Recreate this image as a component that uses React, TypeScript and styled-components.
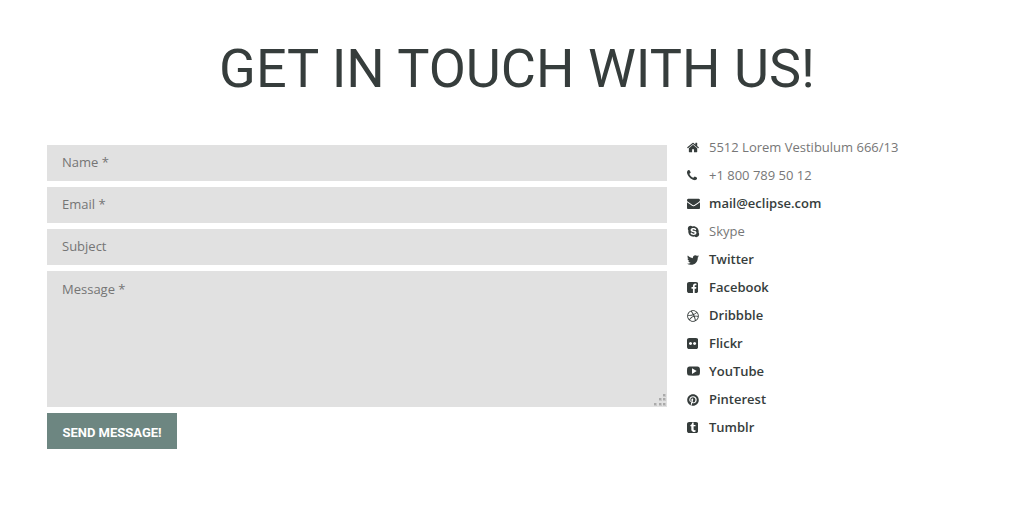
import React from "react";
import styled, { createGlobalStyle } from "styled-components";
import { FaSkype, FaTwitter, FaDribbble, FaPinterest } from "react-icons/fa";

const GlobalStyle = createGlobalStyle`
  *, *::before, *::after { box-sizing: border-box; }
  body {
    margin: 0;
    background: #fff;
    color: #777;
    font: 13px/28px "Open Sans", sans-serif;
  }
`;

const Page = styled.main`
  padding: 33px 42px 58px 47px;
`;

const Title = styled.h1`
  margin: 0 0 28px;
  color: #363d3c;
  font: 400 54px/72px Roboto, sans-serif;
  text-align: center;
  text-transform: uppercase;
`;

const Columns = styled.div`
  display: grid;
  grid-template-columns: minmax(0, 31fr) minmax(0, 15fr);
  gap: 20px;
  align-items: start;
`;

const Form = styled.form`
  display: flex;
  flex-direction: column;
  align-items: flex-start;
  gap: 6px;
  padding-top: 12px;
`;

const Field = styled.input`
  width: 100%;
  height: 36px;
  padding: 0 15px 2px;
  border: 0;
  border-radius: 0;
  background: #e1e1e1;
  color: #363d3c;
  font: 13px/18px "Open Sans", sans-serif;
  &::placeholder { color: #757575; opacity: 1; }
`;

const MessageBox = styled.div`
  position: relative;
  width: 100%;
`;

const Message = styled(Field).attrs({ as: "textarea" })`
  display: block;
  height: 136px;
  padding: 9px 15px;
  resize: none;
`;

const Grip = styled.svg`
  position: absolute;
  right: 0;
  bottom: 0;
  width: 14px;
  height: 14px;
  pointer-events: none;
`;

const SendButton = styled.button`
  min-width: 130px;
  height: 36px;
  padding: 3px 15px 0;
  border: 0;
  background: #6d8681;
  color: #fff;
  font: 700 13px/18px Roboto, sans-serif;
  text-transform: uppercase;
  cursor: pointer;
`;

const Contacts = styled.ul`
  margin: 0;
  padding: 0;
  list-style: none;
`;

const Contact = styled.li`
  display: flex;
  align-items: center;
  height: 28px;
`;

const IconSlot = styled.span<{ $size: number }>`
  display: flex;
  align-items: center;
  width: 22px;
  height: 14px;
  padding-top: 1px;
  color: #363d3c;
  svg { display: block; height: ${(p) => p.$size}px; width: auto; }
`;

const ContactLink = styled.a`
  color: #363d3c;
  font-weight: 600;
  text-decoration: none;
`;

const Glyph = ({ box, d }: { box: string; d: string }) => (
  <svg viewBox={box} fill="currentColor" aria-hidden="true">
    <path d={d} />
  </svg>
);

const HomeIcon = () => (
  <Glyph
    box="64 0 1664 1792"
    d="M1472 992v480q0 26-19 45t-45 19h-384v-384h-256v384h-384q-26 0-45-19t-19-45v-480q0-1 .5-3t.5-3l575-474 575 474q1 2 1 6zm223-69l-62 74q-8 9-21 11h-3q-13 0-21-7l-692-577-692 577q-12 8-24 7-13-2-21-11l-62-74q-8-10-7-23.5t11-21.5l719-599q32-26 76-26t76 26l244 204v-195q0-14 9-23t23-9h192q14 0 23 9t9 23v408l219 182q10 8 11 21.5t-7 23.5z"
  />
);
const PhoneIcon = () => (
  <Glyph
    box="192 0 1408 1792"
    d="M1600 1240q0 27-10 70.5t-21 68.5q-21 50-122 106-94 51-186 51-27 0-53-3.5t-57.5-12.5-47-14.5-55.5-20.5-49-18q-98-35-175-83-127-79-264-216t-216-264q-48-77-83-175-3-9-18-49t-20.5-55.5-14.5-47-12.5-57.5-3.5-53q0-92 51-186 56-101 106-122 25-11 68.5-21t70.5-10q14 0 21 3 18 6 53 76 11 19 30 54t35 63.5 31 53.5q3 4 17.5 25t21.5 35.5 7 28.5q0 20-28.5 50t-62 55-62 53-28.5 46q0 9 5 22.5t8.5 20.5 14 24 11.5 19q76 137 174 235t235 174q2 1 19 11.5t24 14 20.5 8.5 22.5 5q18 0 46-28.5t53-62 55-62 50-28.5q14 0 28.5 7t35.5 21.5 25 17.5q25 15 53.5 31t63.5 35 54 30q70 35 76 53 3 7 3 21z"
  />
);
const MailIcon = () => (
  <Glyph
    box="0 0 1792 1792"
    d="M1792 710v794q0 66-47 113t-113 47h-1472q-66 0-113-47t-47-113v-794q44 49 101 87 362 246 497 345 57 42 92.5 65.5t94.5 48 110 24.5h2q51 0 110-24.5t94.5-48 92.5-65.5q170-123 498-345 57-39 100-87zm0-294q0 79-49 151t-122 123q-376 261-468 325-10 7-42.5 31t-54 38.5-52 32.5-57.5 27-50 9h-2q-23 0-50-9t-57.5-27-52-32.5-54-38.5-42.5-31q-91-64-262-182.5t-205-142.5q-62-42-117-115.5t-55-136.5q0-78 41.5-130t118.5-52h1472q65 0 112.5 47t47.5 113z"
  />
);
const FacebookIcon = () => (
  <Glyph
    box="128 0 1536 1792"
    d="M1376 128q119 0 203.5 84.5t84.5 203.5v960q0 119-84.5 203.5t-203.5 84.5h-188v-595h199l30-232h-229v-148q0-56 23.5-84t91.5-28l122-1v-207q-63-9-178-9-136 0-217.5 80t-81.5 226v171h-200v232h200v595h-532q-119 0-203.5-84.5t-84.5-203.5v-960q0-119 84.5-203.5t203.5-84.5h960z"
  />
);
const FlickrIcon = () => (
  <Glyph
    box="128 0 1536 1792"
    d="M1376 128q119 0 203.5 84.5t84.5 203.5v960q0 119-84.5 203.5t-203.5 84.5h-960q-119 0-203.5-84.5t-84.5-203.5v-960q0-119 84.5-203.5t203.5-84.5h960zm-550 768q0-88-62-150t-150-62-150 62-62 150 62 150 150 62 150-62 62-150zm564 0q0-88-62-150t-150-62-150 62-62 150 62 150 150 62 150-62 62-150z"
  />
);
const TumblrIcon = () => (
  <Glyph
    box="128 0 1536 1792"
    d="M1328 1425l-62-183q-44 22-103 22-36 1-62-10.5t-38.5-31.5-17.5-40.5-5-43.5v-398h257v-194h-256v-326h-188q-8 0-9 10-5 44-17.5 87t-39 95-77 95-118.5 68v165h130v418q0 57 21.5 115t65 111 121 85.5 176.5 30.5q69-1 136.5-25t85.5-50zm336-1009v960q0 119-84.5 203.5t-203.5 84.5h-960q-119 0-203.5-84.5t-84.5-203.5v-960q0-119 84.5-203.5t203.5-84.5h960q119 0 203.5 84.5t84.5 203.5z"
  />
);
const YouTubeIcon = () => (
  <svg viewBox="0 0 13 13" fill="currentColor" aria-hidden="true">
    <path
      fillRule="evenodd"
      d="M2.5 1.6Q6.5 1.4 10.5 1.6Q12.5 1.7 12.8 3.2Q13.2 6 12.8 9Q12.5 10.5 10.5 10.6Q6.5 10.8 2.5 10.6Q.5 10.5 .2 9Q-.2 6 .2 3.2Q.5 1.7 2.5 1.6ZM5 3.3V8.9L9.7 6.1Z"
    />
  </svg>
);

type ContactItem = { icon: React.ReactNode; size?: number; text: string; href?: string };

const contacts: ContactItem[] = [
  { icon: <HomeIcon />, text: "5512 Lorem Vestibulum 666/13" },
  { icon: <PhoneIcon />, text: "+1 800 789 50 12" },
  { icon: <MailIcon />, text: "mail@eclipse.com", href: "mailto:mail@eclipse.com" },
  { icon: <FaSkype />, text: "Skype" },
  { icon: <FaTwitter />, size: 12, text: "Twitter", href: "#twitter" },
  { icon: <FacebookIcon />, text: "Facebook", href: "#facebook" },
  { icon: <FaDribbble />, size: 12, text: "Dribbble", href: "#dribbble" },
  { icon: <FlickrIcon />, text: "Flickr", href: "#flickr" },
  { icon: <YouTubeIcon />, text: "YouTube", href: "#youtube" },
  { icon: <FaPinterest />, size: 12, text: "Pinterest", href: "#pinterest" },
  { icon: <TumblrIcon />, text: "Tumblr", href: "#tumblr" },
];

const gripDots = [
  [10, 1],
  [6, 5],
  [10, 5],
  [1, 10],
  [6, 10],
  [10, 10],
];

export default function App() {
  return (
    <>
      <GlobalStyle />
      <Page>
        <Title>Get in touch with us!</Title>
        <Columns>
          <Form onSubmit={(e) => e.preventDefault()}>
            <Field type="text" name="name" placeholder="Name *" aria-label="Name" />
            <Field type="email" name="email" placeholder="Email *" aria-label="Email" />
            <Field type="text" name="subject" placeholder="Subject" aria-label="Subject" />
            <MessageBox>
              <Message name="message" placeholder="Message *" aria-label="Message" />
              <Grip viewBox="0 0 14 14" aria-hidden="true">
                {gripDots.map(([x, y]) => (
                  <g key={`${x}-${y}`}>
                    <rect x={x} y={y} width="3" height="3" fill="#c8c8c8" />
                    <rect x={x} y={y} width="2" height="2" fill="#aaa" />
                  </g>
                ))}
              </Grip>
            </MessageBox>
            <SendButton type="submit">Send message!</SendButton>
          </Form>
          <Contacts>
            {contacts.map(({ icon, size = 13, text, href }) => (
              <Contact key={text}>
                <IconSlot $size={size}>{icon}</IconSlot>
                {href ? <ContactLink href={href}>{text}</ContactLink> : <span>{text}</span>}
              </Contact>
            ))}
          </Contacts>
        </Columns>
      </Page>
    </>
  );
}
